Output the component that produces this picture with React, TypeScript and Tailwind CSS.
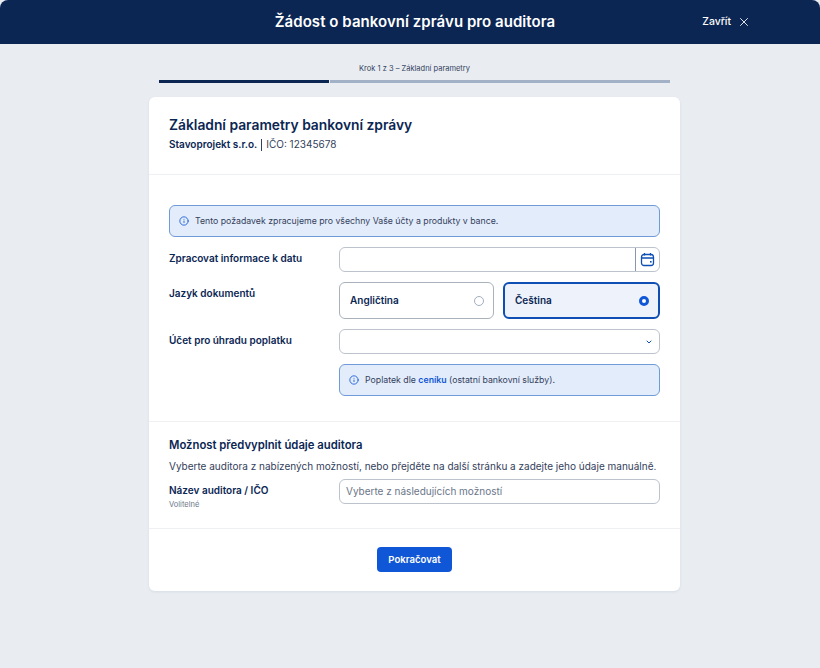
import React from "react";
import { ChevronDown, Info, X } from "lucide-react";

const font = "font-['Inter',sans-serif]";

const InfoBox = ({ children }: { children: React.ReactNode }) => {
	return (
		<div className="flex h-8 items-center gap-[6px] rounded-md border border-[#6f9bd8] bg-[#e3ecfa] px-[9px] text-[8.75px] text-[#33415c]">
			<Info size={10} strokeWidth={2} className="shrink-0 text-[#0f57d6]" />
			<span className="pt-px">{children}</span>
		</div>
	);
};

const Label = ({ children }: { children: React.ReactNode }) => {
	return <div className="text-[10px] font-semibold leading-4 text-[#0b2653]">{children}</div>;
};

const Radio = ({ label, checked = false }: { label: string; checked?: boolean }) => {
	return (
		<div
			className={
				checked
					? "flex h-[37px] flex-1 items-center justify-between rounded-md border-2 border-[#0f4fb4] bg-[#edf2fb] pl-[10px] pr-[9px]"
					: "flex h-[37px] flex-1 items-center justify-between rounded-md border-[1.5px] border-[#a9b1bd] bg-white pl-[10px] pr-[9px]"
			}
		>
			<span className="text-[10px] font-semibold text-[#0b2653]">{label}</span>
			{checked ? (
				<span className="h-[10px] w-[10px] rounded-full border-[3px] border-[#0f57d6] bg-white" />
			) : (
				<span className="h-[10px] w-[10px] rounded-full border border-[#a3aebd] bg-white" />
			)}
		</div>
	);
};

export default function App() {
	return (
		<div className={`${font} min-h-[668px] bg-[#e9edf2]`}>
			<header className="relative flex h-11 items-center justify-center rounded-t-lg bg-[#0b2653] pl-[10px]">
				<h1 className="text-[15px] font-semibold tracking-[0.05px] text-white">
					Žádost o bankovní zprávu pro auditora
				</h1>
				<button className="absolute right-[69px] top-[15px] flex items-center gap-[6px] text-[10.4px] font-medium leading-[14px] text-white">
					Zavřít
					<X size={14} strokeWidth={1.5} />
				</button>
			</header>

			<div className="ml-[149px] w-[531px] pt-[19px]">
				<div className="text-center text-[7.5px] leading-[11px] text-[#33415c]">
					Krok 1 z 3 – Základní parametry
				</div>
				<div className="ml-[10px] mr-[10px] mt-[6px] flex h-[3px] gap-px">
					<div className="w-[170px] bg-[#0b2653]" />
					<div className="flex-1 bg-[#a3b1c6]" />
				</div>

				<main className="mt-[14px] rounded-md bg-white shadow-[0_1px_3px_rgba(11,38,83,0.08)]">
					<section className="h-[78px] border-b border-[#eef0f3] px-5 pt-5">
						<h2 className="text-[13.8px] font-semibold leading-[17px] text-[#0b2653]">
							Základní parametry bankovní zprávy
						</h2>
						<div className="mt-[3px] flex items-center text-[10px] leading-[15px] text-[#33415c]">
							<span className="font-semibold text-[#0b2653]">Stavoprojekt s.r.o.</span>
							<span className="mx-[4px] h-3 w-px bg-[#33415c]" />
							<span>IČO: 12345678</span>
						</div>
					</section>

					<section className="h-[247px] border-b border-[#eef0f3] px-5 pt-[30px]">
						<InfoBox>Tento požadavek zpracujeme pro všechny Vaše účty a produkty v bance.</InfoBox>

						<div className="mt-[10px] grid grid-cols-[170px_321px] items-start">
							<div className="pt-[3px]">
								<Label>Zpracovat informace k datu</Label>
							</div>
							<div className="flex h-[25px] rounded-md border-[1.5px] border-[#bcc3cd]">
								<div className="flex-1" />
								<div className="flex w-6 items-center justify-center border-l border-[#8a97a9]">
									<svg width="15" height="15" viewBox="0 0 15 15" fill="none" stroke="#0f4fb4" strokeWidth="1.3">
										<rect x="1.5" y="2.5" width="12" height="11" rx="2.5" />
										<path d="M1.5 6h12M4.5 1v2.5M10.5 1v2.5" />
										<rect x="10" y="9" width="1.6" height="1.6" fill="#0f4fb4" stroke="none" />
									</svg>
								</div>
							</div>

							<div className="mt-[10px] pt-[3px]">
								<Label>Jazyk dokumentů</Label>
							</div>
							<div className="mt-[10px] flex gap-[9px]">
								<Radio label="Angličtina" />
								<Radio label="Čeština" checked />
							</div>

							<div className="mt-[10px] pt-[3px]">
								<Label>Účet pro úhradu poplatku</Label>
							</div>
							<div className="mt-[10px] flex h-[25px] items-center justify-end rounded-md border-[1.5px] border-[#bcc3cd] pr-[6px]">
								<ChevronDown size={8} strokeWidth={3} className="text-[#0f4fb4]" />
							</div>

							<div className="col-start-2 mt-[10px]">
								<InfoBox>
									Poplatek dle <span className="font-semibold text-[#0f57d6]">ceníku</span> (ostatní bankovní služby).
								</InfoBox>
							</div>
						</div>
					</section>

					<section className="h-[107px] border-b border-[#eef0f3] px-5 pt-4">
						<h3 className="text-[11.3px] font-semibold leading-[14px] text-[#0b2653]">
							Možnost předvyplnit údaje auditora
						</h3>
						<p className="mt-[7px] whitespace-nowrap text-[10px] leading-[14px] text-[#33415c]">
							Vyberte auditora z nabízených možností, nebo přejděte na další stránku a zadejte jeho údaje manuálně.
						</p>
						<div className="mt-[6px] grid grid-cols-[170px_321px] items-start">
							<div className="pt-[3px]">
								<Label>Název auditora / IČO</Label>
								<div className="mt-[2px] text-[7.5px] leading-[10px] text-[#6b7688]">Volitelné</div>
							</div>
							<div className="flex h-[25px] items-center rounded-md border-[1.5px] border-[#bcc3cd] px-[6px] text-[10px] text-[#6b7688]">
								Vyberte z následujících možností
							</div>
						</div>
					</section>

					<section className="flex h-[62px] justify-center pt-[18px]">
						<button className="h-[25px] w-[75px] rounded-[4px] bg-[#0f57d6] pt-px text-[9.6px] font-semibold text-white">
							Pokračovat
						</button>
					</section>
				</main>
			</div>
		</div>
	);
}
